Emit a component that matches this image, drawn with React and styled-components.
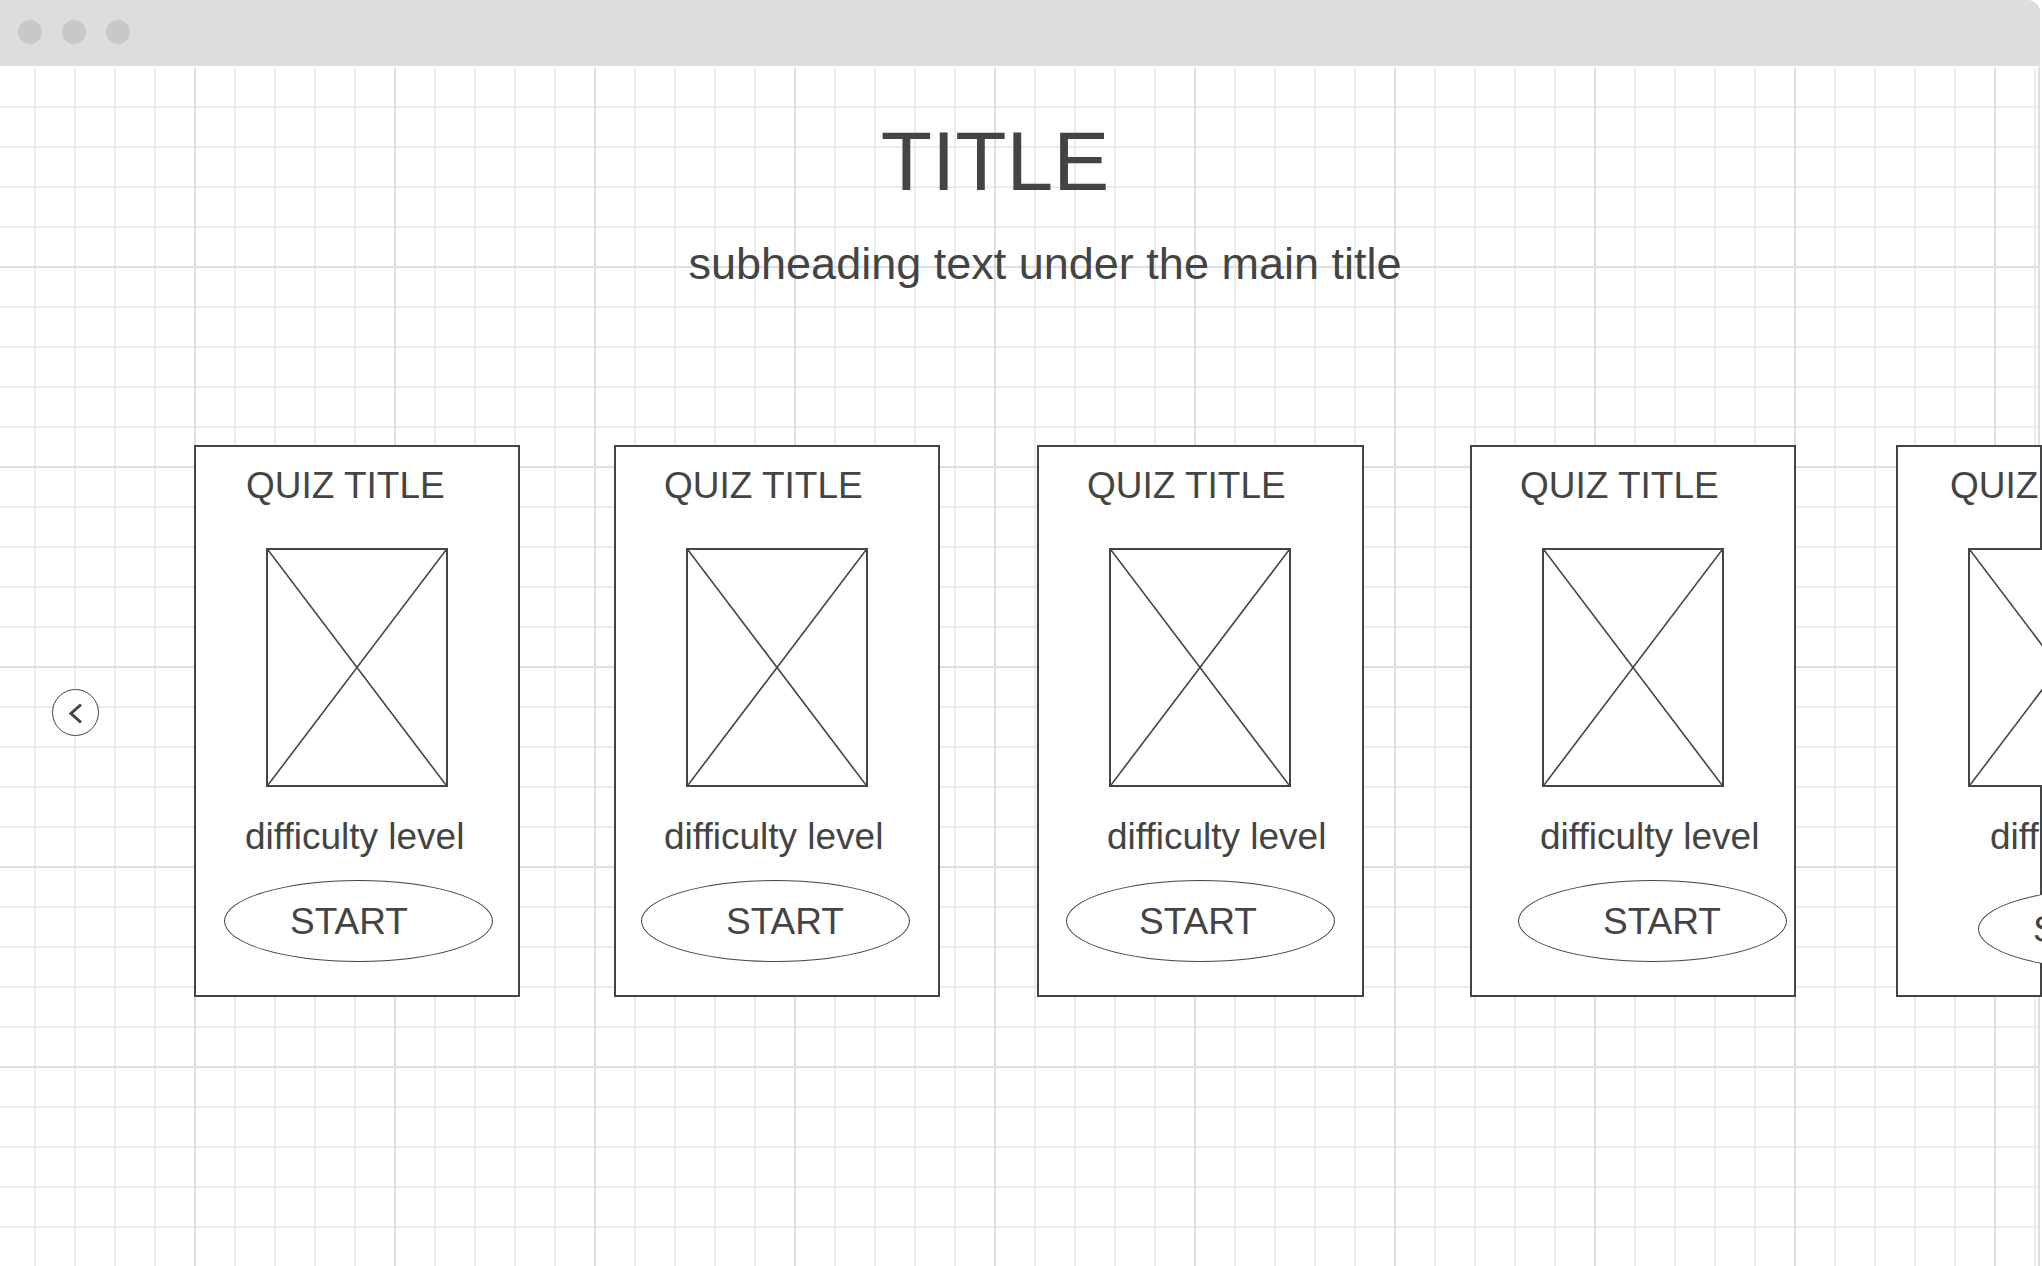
import React from "react";
import styled, { createGlobalStyle, css } from "styled-components";

const GlobalStyle = createGlobalStyle`
  html, body {
    margin: 0;
    padding: 0;
    background: #fff;
  }
  body {
    font-family: "Liberation Sans", Arial, sans-serif;
    color: #444;
  }
`;

const Page = styled.div`
  width: 2042px;
  height: 1266px;
  overflow: hidden;
  background: #fff;
`;

const Window = styled.div`
  width: 2040px;
  height: 1266px;
  display: flex;
  flex-direction: column;
`;

const TitleBar = styled.header`
  flex: none;
  height: 66px;
  display: flex;
  align-items: center;
  gap: 20px;
  padding-left: 18px;
  box-sizing: border-box;
  background: #dddddd;
  border-top-right-radius: 12px;
`;

const Dot = styled.span`
  width: 24px;
  height: 24px;
  border-radius: 50%;
  background: #c8c8c8;
  margin-top: -2px;
`;

/* sketch paper: minor lines every 40px, darker ones every 200px */
const Canvas = styled.main`
  flex: 1;
  display: flex;
  flex-direction: column;
  border-top: 2px solid #fff;
  border-right: 2px solid #e0e0e0;
  background-color: #fff;
  background-clip: padding-box;
  background-image:
    linear-gradient(to right, #dfdfdf 2px, transparent 2px),
    linear-gradient(to bottom, #dfdfdf 2px, transparent 2px),
    linear-gradient(to right, #ececec 2px, transparent 2px),
    linear-gradient(to bottom, #ececec 2px, transparent 2px);
  background-size: 200px 100%, 100% 200px, 40px 100%, 100% 40px;
  background-position: 194px 0, 0 198px, 34px 0, 0 38px;
`;

const Title = styled.h1`
  margin: 51px 0 0;
  padding-right: 48px;
  text-align: center;
  font-size: 84px;
  line-height: 84px;
  font-weight: 400;
  color: #444;
`;

const Subheading = styled.p`
  margin: 38px 0 0;
  padding-left: 52px;
  text-align: center;
  font-size: 45px;
  line-height: 45px;
  color: #444;
`;

const Carousel = styled.section`
  display: flex;
  align-items: flex-start;
  margin-top: 159px;
  padding-left: 52px;
`;

const ArrowButton = styled.button`
  flex: none;
  width: 47px;
  height: 47px;
  margin-top: 244px;
  padding: 0;
  border: 1.5px solid #444;
  border-radius: 50%;
  background: #fff;
  display: flex;
  align-items: center;
  justify-content: center;
  color: #444;

  svg {
    flex: none;
    display: block;
  }
`;

const Card = styled.article`
  position: relative;
  flex: none;
  box-sizing: border-box;
  width: ${(p) => p.$width}px;
  height: 552px;
  margin-left: ${(p) => p.$gap}px;
  padding-top: 20px;
  border: 2px solid #444;
  background: #fff;
  display: flex;
  flex-direction: column;
  align-items: flex-start;

  ${(p) =>
    p.$cut &&
    css`
      border-right: none;
      overflow: hidden;

      &::after {
        content: "";
        position: absolute;
        top: 0;
        right: 0;
        bottom: 0;
        width: 2px;
        background: #444;
        z-index: 0;
      }
    `}
`;

const CardTitle = styled.h2`
  margin: 0 0 0 ${(p) => p.$x - 2}px;
  font-size: 37px;
  line-height: 37px;
  font-weight: 400;
  white-space: nowrap;
  color: #444;
`;

const ImageBox = styled.div`
  position: relative;
  z-index: 1;
  flex: none;
  box-sizing: border-box;
  width: 182px;
  height: 239px;
  margin: 44px 0 0 ${(p) => p.$x - 2}px;
  border: 2px solid #444;
  background: #fff;

  svg {
    display: block;
    width: 100%;
    height: 100%;
  }
`;

const Difficulty = styled.p`
  margin: 31px 0 0 ${(p) => p.$x - 2}px;
  font-size: 37px;
  line-height: 37px;
  white-space: nowrap;
  color: #444;
`;

const StartButton = styled.button`
  position: relative;
  z-index: 1;
  flex: none;
  box-sizing: border-box;
  width: 269px;
  height: 82px;
  margin: ${(p) => 25 + p.$drop}px 0 0 ${(p) => p.$x - 2}px;
  padding: 0 0 0 ${(p) => p.$textX}px;
  border: 1.5px solid #444;
  border-radius: 50%;
  background: #fff;
  display: flex;
  align-items: center;
  font-family: "Liberation Sans", Arial, sans-serif;
  font-size: 37px;
  line-height: 37px;
  color: #444;
  white-space: nowrap;
`;

const quizzes = [
  { gap: 95, width: 326, title: 52, image: 72, diff: 51, btn: 30, textX: 65, drop: 0 },
  { gap: 94, width: 326, title: 50, image: 72, diff: 50, btn: 27, textX: 84, drop: 0 },
  { gap: 97, width: 327, title: 50, image: 72, diff: 70, btn: 29, textX: 72, drop: 0 },
  { gap: 106, width: 326, title: 50, image: 72, diff: 70, btn: 48, textX: 84, drop: 0 },
  { gap: 100, width: 146, title: 54, image: 72, diff: 94, btn: 82, textX: 54, drop: 8, cut: true },
];

function Placeholder() {
  return (
    <svg preserveAspectRatio="none">
      <line x1="0" y1="0" x2="100%" y2="100%" stroke="#444" strokeWidth="1.6" />
      <line x1="100%" y1="0" x2="0" y2="100%" stroke="#444" strokeWidth="1.6" />
    </svg>
  );
}

export default function App() {
  return (
    <Page>
      <GlobalStyle />
      <Window>
        <TitleBar>
          <Dot />
          <Dot />
          <Dot />
        </TitleBar>
        <Canvas>
          <Title>TITLE</Title>
          <Subheading>subheading text under the main title</Subheading>
          <Carousel>
            <ArrowButton aria-label="previous">
              <svg width="18" height="24" viewBox="0 0 18 24">
                <polyline points="14,3.5 4,12.5 14,21.5" fill="none" stroke="#444" strokeWidth="3" />
              </svg>
            </ArrowButton>
            {quizzes.map((q, i) => (
              <Card key={i} $gap={q.gap} $width={q.width} $cut={q.cut}>
                <CardTitle $x={q.title}>QUIZ TITLE</CardTitle>
                <ImageBox $x={q.image}>
                  <Placeholder />
                </ImageBox>
                <Difficulty $x={q.diff}>difficulty level</Difficulty>
                <StartButton $x={q.btn} $textX={q.textX} $drop={q.drop}>
                  START
                </StartButton>
              </Card>
            ))}
          </Carousel>
        </Canvas>
      </Window>
    </Page>
  );
}
